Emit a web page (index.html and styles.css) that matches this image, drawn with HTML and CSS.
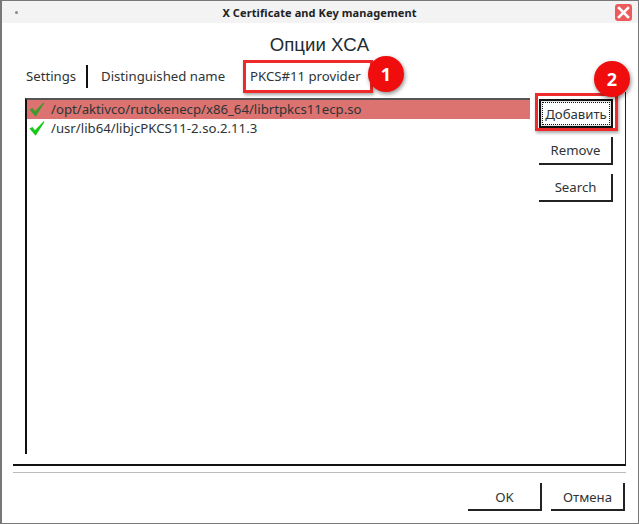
FILE: index.html
```html
<!DOCTYPE html>
<html lang="ru">
<head>
<meta charset="utf-8">
<title>X Certificate and Key management</title>
<link rel="stylesheet" href="styles.css">
</head>
<body>
<div class="window">
  <header class="titlebar">
    <span class="menu-dot"></span>
    <span class="title">X Certificate and Key management</span>
    <span class="close"><svg width="13" height="13" viewBox="0 0 13 13"><path d="M2 2 11 11M11 2 2 11" stroke="#fff" stroke-width="2.6" stroke-linecap="square"/></svg></span>
  </header>
  <div class="content">
    <h1 class="heading">Опции XCA</h1>
    <nav class="tabs">
      <span class="tab tab-settings">Settings</span>
      <span class="tab tab-dn">Distinguished name</span>
      <span class="tab tab-pkcs">PKCS#11 provider</span>
    </nav>
    <section class="pane">
      <div class="list">
        <div class="row selected">
          <svg class="check" width="16" height="15" viewBox="0 0 16 15"><path d="M.5 7.6 3.4 6 6 9.2 14.6 .2 15.4 1 6.6 14.8Z" fill="#3f9a2c"/></svg>
          <span>/opt/aktivco/rutokenecp/x86_64/librtpkcs11ecp.so</span>
        </div>
        <div class="row">
          <svg class="check" width="16" height="15" viewBox="0 0 16 15"><path d="M.5 7.6 3.4 6 6 9.2 14.6 .2 15.4 1 6.6 14.8Z" fill="#16c916"/></svg>
          <span>/usr/lib64/libjcPKCS11-2.so.2.11.3</span>
        </div>
      </div>
      <div class="side">
        <button class="btn btn-focus"><span class="focus-ring">Добавить</span></button>
        <button class="btn">Remove</button>
        <button class="btn">Search</button>
      </div>
    </section>
    <hr class="sep">
    <footer class="footer">
      <button class="btn">OK</button>
      <button class="btn">Отмена</button>
    </footer>
  </div>
  <span class="mark mark-tab"></span>
  <span class="mark mark-btn"></span>
  <span class="badge badge-1">1</span>
  <span class="badge badge-2">2</span>
</div>
</body>
</html>
```
FILE: styles.css
```css
* { box-sizing: border-box; }
html, body { margin: 0; padding: 0; }
body { width: 639px; height: 524px; background: #fff; overflow: hidden; font-family: "Noto Sans", "Open Sans", sans-serif; color: #2e3436; }
.window { position: relative; width: 639px; height: 524px; border: 1px solid #777; border-left-width: 2px; background: #fff; display: flex; flex-direction: column; }
.titlebar { height: 22px; background: #f3f3f3; display: flex; align-items: center; justify-content: center; position: relative; flex: none; }
.title { font-size: 11px; font-weight: 700; color: #222; letter-spacing: .1px; margin-left: -1px; }
.menu-dot { position: absolute; left: 13px; top: 10px; width: 3px; height: 3px; border-radius: 50%; background: #888; }
.close { position: absolute; right: 6px; top: 3px; width: 17px; height: 17px; border-radius: 3px; background: #ee5a5a; display: flex; align-items: center; justify-content: center; }
.close svg { display: block; }
.content { flex: 1; display: flex; flex-direction: column; padding: 0 12px 0 11px; min-height: 0; }
.heading { margin: 10px 0 0; height: 24px; font: 400 18.6px/24px "Liberation Sans", sans-serif; text-align: center; color: #222b30; }
.tabs { display: flex; align-items: center; height: 32px; margin-top: 3px; padding-left: 13px; font-size: 13.2px; flex: none; }
.tab { display: block; line-height: 22px; white-space: nowrap; }
.tab-settings { width: 62px; border-right: 2px solid #111; height: 23px; }
.tab-dn { margin-left: 13px; width: 145px; }
.tab-pkcs { margin-left: 4px; }
.pane { flex: 1; min-height: 0; display: flex; align-items: flex-start; border-right: 1px solid #222; border-bottom: 2px solid #111; padding: 6px 11px 10px 12px; }
.list { width: 505px; height: 100%; border-left: 2px solid #111; border-top: 2px solid #555; flex: none; font-size: 13.2px; }
.row { height: 19px; display: flex; align-items: center; gap: 6px; padding-left: 2px; white-space: nowrap; }
.row span { position: relative; top: -1px; }
.row.selected { background: #dc7370; }
.check { flex: none; }
.side { width: 74px; margin-left: 9px; display: flex; flex-direction: column; gap: 9px; flex: none; margin-top: 1px; }
.btn { width: 74px; height: 28px; padding: 0 0 0 1px; background: #fff; border: 0; border-right: 2px solid #222; border-bottom: 2px solid #222; font: 13.2px "Noto Sans", "Open Sans", sans-serif; color: #2e3436; display: block; }
.btn-focus { height: 29px; border: 2px solid #111; background: #e4e4e4; padding: 1px; }
.focus-ring { display: block; height: 100%; line-height: 23px; background: #fff; border: 1px dotted #111; white-space: nowrap; }
.sep { margin: 6px 0 0; border: 0; border-top: 1px solid #bbb; height: 1px; flex: none; }
.footer { height: 50px; display: flex; justify-content: flex-end; gap: 9px; padding: 10px 1px 0 0; flex: none; }
.footer .btn { padding-top: 2px; }
.mark { position: absolute; border: 3px solid #ee2a2a; box-shadow: 1px 2px 3px rgba(0,0,0,.35); pointer-events: none; }
.mark-tab { left: 241px; top: 59px; width: 130px; height: 33px; }
.mark-btn { left: 533px; top: 92px; width: 83px; height: 38px; }
.badge { position: absolute; width: 36px; height: 36px; border-radius: 50%; background: #f00d0d; color: #fff; font: 700 18px/36px "Noto Sans", sans-serif; text-align: center; box-shadow: 1px 2px 4px rgba(0,0,0,.45); }
.badge-1 { left: 366px; top: 55px; }
.badge-2 { left: 592px; top: 60px; }
```
